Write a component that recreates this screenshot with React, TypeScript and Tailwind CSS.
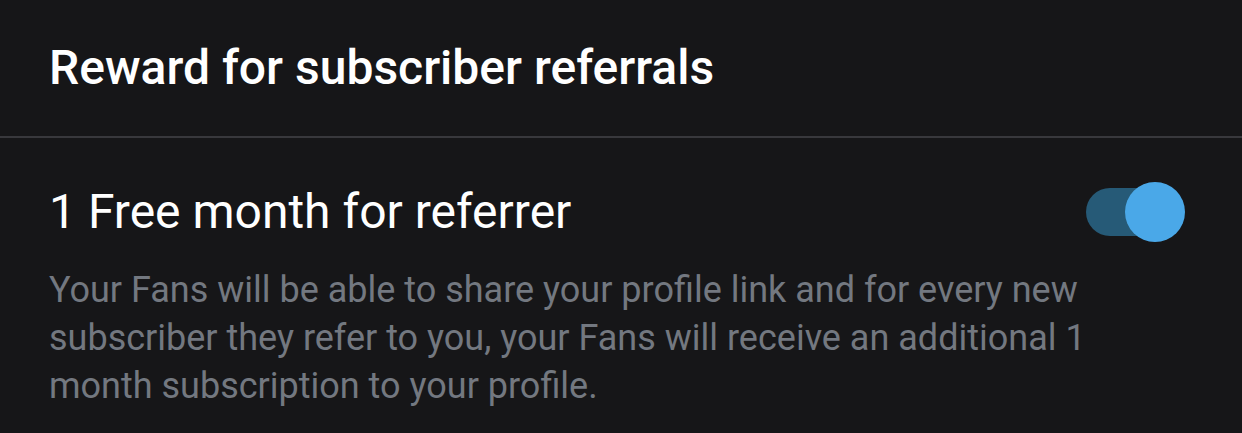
import React from 'react';

export default function App() {
  return (
    <div className="min-h-screen bg-[#161618] font-['Roboto',sans-serif] antialiased">
      {/* Header */}
      <div className="h-[136px] flex items-center px-[49px]">
        <h1 className="text-[48px] leading-none font-medium text-white">
          Reward for subscriber referrals
        </h1>
      </div>
      <div className="h-[2px] bg-[#38383c]" />

      {/* Setting row */}
      <div className="px-[49px] pt-[44px]">
        <div className="flex items-center justify-between">
          <h2 className="text-[48px] leading-[48px] text-white">1 Free month for referrer</h2>
          <button className="relative w-[99px] h-[60px] mr-[8px] flex items-center">
            <span className="absolute left-0 right-[10px] h-[48px] rounded-full bg-[#265a77]" />
            <span className="absolute right-0 w-[60px] h-[60px] rounded-full bg-[#4aa8e8]" />
          </button>
        </div>
        <p className="mt-[24px] max-w-[1050px] text-[36px] leading-[48px] text-[#737880]">
          Your Fans will be able to share your profile link and for every new subscriber they refer
          to you, your Fans will receive an additional 1 month subscription to your profile.
        </p>
      </div>
    </div>
  );
}
